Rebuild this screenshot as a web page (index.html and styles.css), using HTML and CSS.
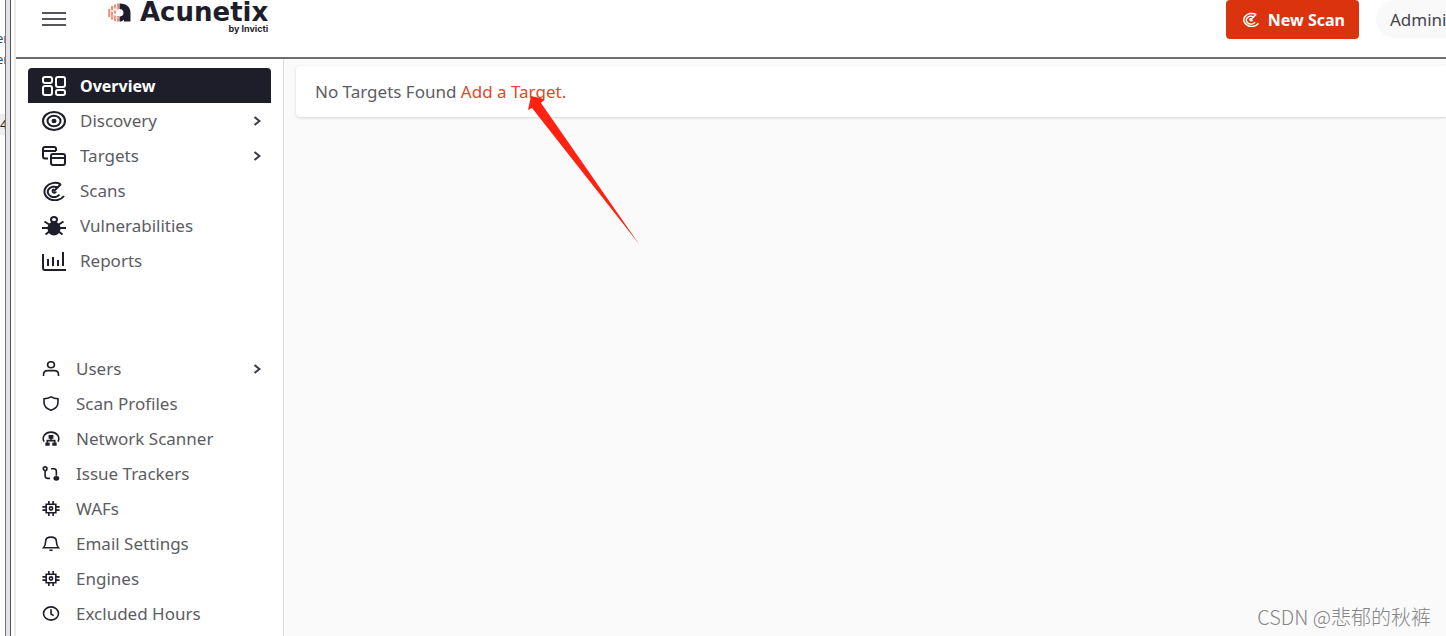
FILE: index.html
```
<!DOCTYPE html>
<html lang="en">
<head>
    <meta charset="utf-8">
    <title>Acunetix</title>
    <link rel="stylesheet" href="styles.css">
</head>
<body>
    <svg class="sprite" aria-hidden="true">
        <symbol id="radar" viewBox="0 0 24 20" preserveAspectRatio="none">
            <path d="M18.500 3.200A10.500 8.700 0 1 0 22 15M15.500 6.500A6.300 5.200 0 1 0 17.500 13.500M19 3L12 10M12 8.500a1.800 1.600 0 1 0 2 2"/>
        </symbol>
        <symbol id="chevron" viewBox="0 0 8 10">
            <path d="M1.500 1L6.500 5L1.500 9"/>
        </symbol>
        <symbol id="chip" viewBox="0 0 16 14">
            <path d="M3.500 3h9v8h-9zM6 0v3M10 0v3M6 11v3M10 11v3M0 5.500h3.500M0 8.500h3.500M12.500 5.500H16M12.500 8.500H16"/>
            <circle cx="8" cy="7" r="1.500"/>
        </symbol>
    </svg>

    <!-- edge of the neighbouring window -->
    <div class="edge">
        <div class="edge-text">
            <span>er</span>
            <span>er</span>
            <span class="edge-mark">4</span>
        </div>
        <div class="edge-bar"></div>
    </div>

    <div class="app">
        <header class="header">
            <button class="menu" aria-label="Menu">
                <svg class="icon" viewBox="0 0 24 20"><path d="M0 4h24M0 10h24M0 16h24"/></svg>
            </button>
            <a class="logo" href="#">
                <svg class="logo-mark" viewBox="0 0 24 20">
                    <path class="ink" d="M11.500 .5C19 .5 22.500 4.500 22.500 10v8.500h-6.500v-2c-1 1.500-2.500 2-4.500 2v-5c2.500 0 4-1.500 4-3.800s-1.500-3.700-4-3.700z"/>
                    <path class="rays" d="M1.200 6v8M4 3v4M4 9v7.500M7 1.500v4M7 7.500v3M7 12.500v5.500M10 .5v6M10 13v5.500"/>
                    <path class="rays-soft" d="M2.500 8h4M5 5h5M2.500 13h4M7 15h4"/>
                </svg>
                <span class="logo-text">
                    <span class="logo-name">Acunetix</span>
                    <span class="logo-by">by Invicti</span>
                </span>
            </a>
            <button class="new-scan">
                <svg class="icon-sm"><use href="#radar"/></svg>
                New Scan
            </button>
            <button class="account">Admini</button>
        </header>

        <div class="body">
            <nav class="sidebar">
                <ul class="nav">
                    <li><a class="item active" href="#">
                        <svg class="icon" viewBox="0 0 24 20"><rect x="1" y="1" width="9" height="6" rx="2"/><rect x="14" y="1" width="9" height="10" rx="2"/><rect x="1" y="10" width="9" height="9" rx="2"/><rect x="14" y="14" width="9" height="5" rx="2"/></svg>
                        Overview</a></li>
                    <li><a class="item" href="#">
                        <svg class="icon" viewBox="0 0 24 20"><ellipse cx="12" cy="10" rx="11" ry="9"/><ellipse cx="12" cy="10" rx="6.500" ry="5.300"/><ellipse class="solid" cx="12" cy="10" rx="1.500" ry="1.200"/></svg>
                        Discovery<svg class="chevron"><use href="#chevron"/></svg></a></li>
                    <li><a class="item" href="#">
                        <svg class="icon" viewBox="0 0 24 20"><path d="M6 12.500H3q-2 0-2-2V3q0-2 2-2h9q2 0 2 2v2M1 5h13"/><rect x="9" y="8" width="14" height="11" rx="2"/><path d="M9 12h14"/></svg>
                        Targets<svg class="chevron"><use href="#chevron"/></svg></a></li>
                    <li><a class="item" href="#">
                        <svg class="icon"><use href="#radar"/></svg>
                        Scans</a></li>
                    <li><a class="item" href="#">
                        <svg class="icon" viewBox="0 0 24 20"><ellipse class="solid" cx="12" cy="12.500" rx="5.500" ry="6"/><ellipse cx="12" cy="3.500" rx="3" ry="2.500"/><path d="M0 12h24M2.500 5.500L8 9M21.500 5.500L16 9M3.500 18.500L8 15M20.500 18.500L16 15"/></svg>
                        Vulnerabilities</a></li>
                    <li><a class="item" href="#">
                        <svg class="icon" viewBox="0 0 24 20"><path d="M1 3v14q0 2 2 2h21M6 8v7M11 6v9M16 9v6M21 1v14"/></svg>
                        Reports</a></li>
                </ul>

                <ul class="nav nav-small">
                    <li><a class="item" href="#">
                        <svg class="icon-sm" viewBox="0 0 16 14"><ellipse cx="8" cy="3.500" rx="3.200" ry="2.800"/><path d="M1 14v-1q0-4 4-4h6q4 0 4 4v1"/></svg>
                        Users<svg class="chevron"><use href="#chevron"/></svg></a></li>
                    <li><a class="item" href="#">
                        <svg class="icon-sm" viewBox="0 0 16 14"><path d="M8 .8Q11 2.500 14.500 2.500V6q0 5-6.500 7.300Q1.500 11 1.500 6V2.500Q5 2.500 8 .8z"/></svg>
                        Scan Profiles</a></li>
                    <li><a class="item" href="#">
                        <svg class="icon-sm" viewBox="0 0 16 14"><path d="M1.500 10C-1 5 3 1 8 1s9 4 6.500 9M8 6v3M4.500 11V9h7v2"/><path class="solid" d="M6.500 4.500h3v2h-3z"/><path d="M3.500 11.500h2.500v1.500H3.500zM10 11.500h2.500v1.500H10z"/></svg>
                        Network Scanner</a></li>
                    <li><a class="item" href="#">
                        <svg class="icon-sm" viewBox="0 0 16 14"><circle cx="2.500" cy="2.500" r="1.700"/><path d="M2.500 4.500V9q0 2.500 2.500 2.500h2M8 2.500h2.500Q13 2.500 13 5v4"/><ellipse class="solid" cx="13" cy="11.500" rx="2" ry="1.500"/></svg>
                        Issue Trackers</a></li>
                    <li><a class="item" href="#">
                        <svg class="icon-sm"><use href="#chip"/></svg>
                        WAFs</a></li>
                    <li><a class="item" href="#">
                        <svg class="icon-sm" viewBox="0 0 16 14"><path d="M1 11q2-2 2-6 0-4 5-4t5 4q0 4 2 6zM6.500 13.300h3"/></svg>
                        Email Settings</a></li>
                    <li><a class="item" href="#">
                        <svg class="icon-sm"><use href="#chip"/></svg>
                        Engines</a></li>
                    <li><a class="item" href="#">
                        <svg class="icon-sm" viewBox="0 0 16 14"><ellipse cx="8" cy="7" rx="7" ry="6.200"/><path d="M8 3v4.500l2.500 1.500"/></svg>
                        Excluded Hours</a></li>
                </ul>
            </nav>

            <main class="content">
                <div class="card">
                    No Targets Found <a class="add" href="#">Add a Target.</a>
                </div>
            </main>
        </div>
    </div>

    <svg class="arrow" viewBox="0 0 112 150" aria-hidden="true">
        <path d="M3 1L16 4L13 8L111 149L4 13L0 15z"/>
    </svg>
    <div class="watermark">CSDN @悲郁的秋裤</div>
</body>
</html>
```

FILE: styles.css
```
* {
    box-sizing: border-box;
}
body {
    display: flex;
    position: relative;
    min-height: 100vh;
    margin: 0;
    overflow: hidden;
    font-family: "Noto Sans", "Noto Sans CJK SC", sans-serif;
    font-size: 17px;
    color: #5c5c64;
    background-color: #fff;
}
button {
    border: none;
    font: inherit;
    cursor: pointer;
}
a {
    color: inherit;
    text-decoration: none;
}
.sprite {
    position: absolute;
    width: 0;
    height: 0;
}

/* Neighbouring window */
.edge {
    display: flex;
    flex: none;
    width: 16px;
    border-right: 2px solid #ebebeb;
}
.edge-text {
    display: flex;
    flex-direction: column;
    width: 5px;
    padding-top: 28px;
    overflow: hidden;
    font-size: 13px;
    line-height: 21px;
    color: #20508a;
}
.edge-text span {
    margin-left: -4px;
}
.edge-text .edge-mark {
    margin: 44px 0 0;
    background-color: #eee;
    color: #222;
}
.edge-bar {
    width: 6px;
    background-color: #e2e2e6;
    border-left: 1px solid #777;
    border-right: 1px solid #555;
}

.app {
    display: flex;
    flex-direction: column;
    flex: 1;
    min-width: 0;
}

/* Header */
.header {
    display: flex;
    align-items: flex-start;
    height: 59px;
    border-bottom: 2px solid #6c6c6c;
}
.menu {
    display: flex;
    margin: 9px 0 0 26px;
    padding: 0;
    background: none;
}
.logo {
    display: flex;
    gap: 8px;
    margin-left: 42px;
    color: #1e1e2a;
}
.logo-mark {
    width: 24px;
    height: 20px;
    margin-top: 3px;
}
.ink {
    fill: #1e1e2a;
}
.rays,
.rays-soft {
    fill: none;
    stroke: #f58a74;
    stroke-width: 2;
}
.rays-soft {
    stroke: #fbc4b8;
    stroke-width: 1;
}
.logo-text {
    display: flex;
    flex-direction: column;
    align-items: flex-end;
    font-weight: bold;
}
.logo-name {
    font-family: "DejaVu Sans", sans-serif;
    font-size: 26px;
    line-height: 24px;
}
.logo-by {
    font-family: Inter, sans-serif;
    font-size: 9px;
    line-height: 10px;
}
.new-scan {
    display: flex;
    align-items: center;
    gap: 8px;
    height: 39px;
    margin-left: auto;
    padding: 0 14px 0 16px;
    border-radius: 4px;
    background-color: #da330d;
    color: #fff;
    font-size: 16px;
    font-weight: bold;
}
.account {
    width: 70px;
    height: 38px;
    margin-left: 17px;
    padding: 0 0 0 14px;
    overflow: hidden;
    border-radius: 19px 0 0 19px;
    background-color: #f9f9f9;
    color: #44444e;
    text-align: left;
}

/* Icons */
.icon,
.icon-sm,
.chevron {
    flex: none;
    fill: none;
    stroke: #1e1e2a;
    stroke-width: 2;
}
.icon {
    width: 24px;
    height: 20px;
}
.icon-sm {
    width: 18px;
    height: 15px;
    stroke-width: 1.5;
}
.chevron {
    width: 8px;
    height: 10px;
    margin-left: auto;
    stroke: #3c3c46;
}
.solid {
    fill: #1e1e2a;
}
.menu .icon {
    stroke: #55555e;
}
.new-scan .icon-sm {
    stroke: #fff;
    stroke-width: 2;
}

/* Sidebar */
.body {
    display: flex;
    flex: 1;
}
.sidebar {
    display: flex;
    flex-direction: column;
    gap: 73px;
    flex: none;
    width: 268px;
    padding: 9px 12px 0;
    border-right: 1px solid #ddd;
}
.nav {
    margin: 0;
    padding: 0;
    list-style: none;
}
.item {
    display: flex;
    align-items: center;
    gap: 14px;
    height: 35px;
    padding: 0 10px 0 14px;
}
.nav-small .item {
    gap: 16px;
}
.active {
    border-radius: 4px 4px 0 0;
    background-color: #1e1e2a;
    color: #fff;
    font-size: 16px;
    font-weight: bold;
}
.active .icon {
    stroke: #fff;
}

/* Content */
.content {
    flex: 1;
    padding: 7px 0 0 12px;
    background-color: #fafafa;
}
.card {
    padding: 14px 19px;
    border-radius: 4px 0 0 4px;
    background-color: #fff;
    box-shadow: 0 1px 3px rgba(0, 0, 0, 0.15);
    line-height: 23px;
}
.add {
    color: #dc4a2e;
}

/* Annotation over the page */
.arrow {
    position: absolute;
    top: 95px;
    left: 528px;
    width: 112px;
    height: 150px;
    fill: #ff2213;
}
.watermark {
    position: absolute;
    right: 15px;
    bottom: 5px;
    font-family: "Noto Sans CJK SC", sans-serif;
    font-size: 20px;
    font-weight: 300;
    line-height: 28px;
    color: #858585;
}
```
